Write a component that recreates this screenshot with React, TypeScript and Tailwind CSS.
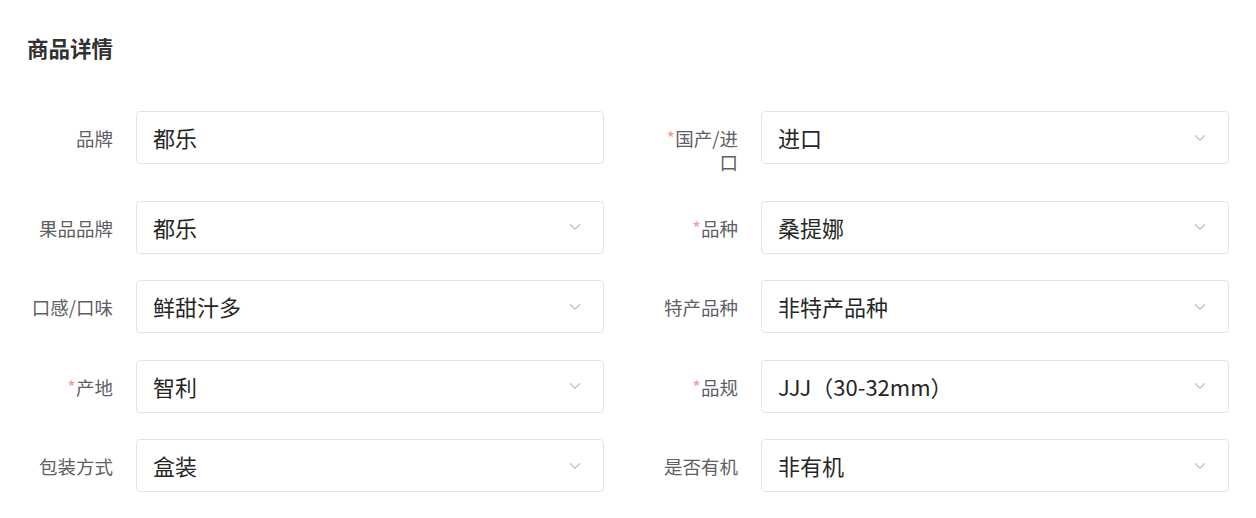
const rows: { left: Field; right: Field }[] = [
  {
    left: { label: "品牌", value: "都乐", select: false },
    right: { label: "国产/进口", value: "进口", required: true },
  },
  {
    left: { label: "果品品牌", value: "都乐" },
    right: { label: "品种", value: "桑提娜", required: true },
  },
  {
    left: { label: "口感/口味", value: "鲜甜汁多" },
    right: { label: "特产品种", value: "非特产品种" },
  },
  {
    left: { label: "产地", value: "智利", required: true },
    right: { label: "品规", value: "JJJ（30-32mm）", required: true },
  },
  {
    left: { label: "包装方式", value: "盒装" },
    right: { label: "是否有机", value: "非有机" },
  },
];

type Field = {
  label: string;
  value: string;
  required?: boolean;
  select?: boolean;
};

function Chevron() {
  return (
    <svg width="12" height="8" viewBox="0 0 12 8" fill="none" className="shrink-0">
      <path d="M1.5 1.8 6 6.2l4.5-4.4" stroke="#c0c4cc" strokeWidth="1.4" strokeLinecap="round" strokeLinejoin="round" />
    </svg>
  );
}

function FormItem({ field }: { field: Field }) {
  const isSelect = field.select !== false;
  return (
    <div className="flex items-start gap-[23px]">
      <label className="w-[86px] shrink-0 pt-[15px] text-right text-[18.5px] leading-[24px] text-[#5e6066]">
        {field.required && <span className="text-[#f89898]">*</span>}
        {field.label}
      </label>
      <div className="flex h-[53px] flex-1 items-center rounded-[4px] border border-[#e2e3ec] bg-white pl-[16px] pr-[22px]">
        <span className="flex-1 text-[22px] text-[#262626]">{field.value}</span>
        {isSelect && <Chevron />}
      </div>
    </div>
  );
}

export default function App() {
  return (
    <div
      className="h-[518px] w-[1256px] overflow-hidden bg-white"
      style={{ fontFamily: '"Noto Sans CJK SC", "Noto Sans", sans-serif' }}
    >
      <h2 className="pl-[27px] pt-[34px] text-[21.5px] font-bold leading-[28px] text-[#303133]">商品详情</h2>
      <div className="mt-[49px] grid grid-cols-[577px_577px] gap-x-[48px] gap-y-[26.5px] pl-[27px]">
        {rows.map((r, i) => (
          <div key={i} className="contents">
            <FormItem field={r.left} />
            <FormItem field={r.right} />
          </div>
        ))}
      </div>
    </div>
  );
}
